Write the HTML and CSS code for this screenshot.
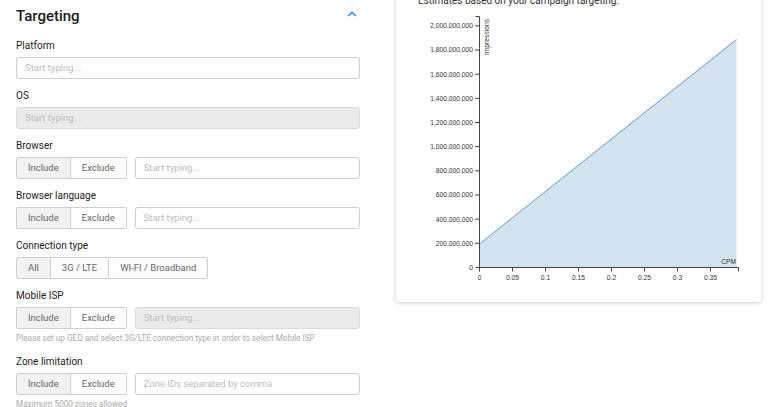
FILE: index.html
```html
<!DOCTYPE html>
<html lang="en">
<head>
    <meta charset="utf-8">
    <link rel="stylesheet" href="styles.css">
    <title>Campaign targeting</title>
</head>
<body>
<div class="page">
    <div class="targeting">
        <div class="head">
            <h2>Targeting</h2>
            <svg class="chev" width="10" height="6" viewBox="0 0 10 6"><polyline points="1,5 5,1.5 9,5" fill="none" stroke="#2d8cf0" stroke-width="1.6"/></svg>
        </div>

        <div class="field">
            <label>Platform</label>
            <div class="input">Start typing...</div>
        </div>

        <div class="field">
            <label>OS</label>
            <div class="input disabled">Start typing...</div>
        </div>

        <div class="field">
            <label>Browser</label>
            <div class="row">
                <div class="btns"><span class="btn on">Include</span><span class="btn">Exclude</span></div>
                <div class="input">Start typing...</div>
            </div>
        </div>

        <div class="field">
            <label>Browser language</label>
            <div class="row">
                <div class="btns"><span class="btn on">Include</span><span class="btn">Exclude</span></div>
                <div class="input">Start typing...</div>
            </div>
        </div>

        <div class="field">
            <label>Connection type</label>
            <div class="row">
                <div class="btns"><span class="btn on">All</span><span class="btn">3G / LTE</span><span class="btn">WI-FI / Broadband</span></div>
            </div>
        </div>

        <div class="field">
            <label>Mobile ISP</label>
            <div class="row">
                <div class="btns"><span class="btn on">Include</span><span class="btn">Exclude</span></div>
                <div class="input disabled">Start typing...</div>
            </div>
            <div class="help">Please set up GEO and select 3G/LTE connection type in order to select Mobile ISP</div>
        </div>

        <div class="field">
            <label>Zone limitation</label>
            <div class="row">
                <div class="btns"><span class="btn on">Include</span><span class="btn">Exclude</span></div>
                <div class="input">Zone IDs separated by comma</div>
            </div>
            <div class="help">Maximum 5000 zones allowed</div>
        </div>
    </div>

    <div class="card">
        <div class="note">Estimates based on your campaign targeting.</div>
        <svg class="chart" width="365" height="284" viewBox="396 8 365 284">
            <polygon points="479.5,267.5 479.5,244 736.5,39.5 736.5,267.5" fill="#d3e3f0"/>
            <path d="M479.5,267.5V244L736.5,39.5" fill="none" stroke="#5b9bd5" stroke-width="1"/>

            <g class="axis">
                <path d="M475.5,16.5H479.5V267.5H475.5"/>
                <path d="M475,243.3h4.5M475,219.2h4.5M475,195h4.5M475,170.8h4.5M475,146.6h4.5M475,122.5h4.5M475,98.3h4.5M475,74.2h4.5M475,50h4.5M475,25.8h4.5"/>
                <path d="M479.5,271.5V267.5H738.5V271.5"/>
                <path d="M512.5,267.5v4M545.5,267.5v4M578.5,267.5v4M611.5,267.5v4M644.5,267.5v4M677.5,267.5v4M710.5,267.5v4"/>
            </g>

            <g class="ticks ylab">
                <text x="473" y="269.8">0</text>
                <text x="473" y="245.6">200,000,000</text>
                <text x="473" y="221.5">400,000,000</text>
                <text x="473" y="197.3">600,000,000</text>
                <text x="473" y="173.1">800,000,000</text>
                <text x="473" y="148.9">1,000,000,000</text>
                <text x="473" y="124.8">1,200,000,000</text>
                <text x="473" y="100.6">1,400,000,000</text>
                <text x="473" y="76.5">1,600,000,000</text>
                <text x="473" y="52.3">1,800,000,000</text>
                <text x="473" y="28.1">2,000,000,000</text>
            </g>
            <g class="ticks xlab">
                <text x="479.5" y="279.5">0</text>
                <text x="512.5" y="279.5">0.05</text>
                <text x="545.5" y="279.5">0.1</text>
                <text x="578.5" y="279.5">0.15</text>
                <text x="611.5" y="279.5">0.2</text>
                <text x="644.5" y="279.5">0.25</text>
                <text x="677.5" y="279.5">0.3</text>
                <text x="710.5" y="279.5">0.35</text>
            </g>
            <text class="ticks" x="736" y="264" text-anchor="end">CPM</text>
            <text class="ticks" transform="translate(488.5,19) rotate(-90)" text-anchor="end">Impressions</text>
        </svg>
    </div>
</div>
</body>
</html>
```

FILE: styles.css
```css
body{
    margin: 0;
    background: #fff;
    font-family: Roboto, "Liberation Sans", sans-serif;
    color: #222;
    overflow: hidden;
}
.page{
    display: flex;
    align-items: flex-start;
}

/* left form */
.targeting{
    width: 344px;
    margin-left: 16px;
    padding-top: 6px;
}
.head{
    display: flex;
    justify-content: space-between;
    align-items: center;
    height: 20px;
    margin-bottom: 11px;
}
.head h2{
    margin: 0;
    font-size: 15px;
    font-weight: 500;
    line-height: 20px;
    color: #1b1b1b;
}
.chev{
    margin-right: 3px;
    margin-top: -4px;
}
.field{
    margin-bottom: 8px;
}
.field label{
    display: block;
    font-size: 10px;
    line-height: 14px;
    padding-top: 2px;
    margin-bottom: 4px;
    color: #222;
}
.input{
    flex: 1;
    height: 22px;
    box-sizing: border-box;
    border: 1px solid #cfcfcf;
    border-radius: 3px;
    padding: 0 8px;
    font-size: 9.5px;
    line-height: 20px;
    color: #bdbdbd;
    background: #fff;
}
.input.disabled{
    background: #ebebeb;
    border-color: #dadada;
}
.row{
    display: flex;
    gap: 8px;
}
.btns{
    display: flex;
    height: 22px;
    box-sizing: border-box;
    border: 1px solid #cfcfcf;
    border-radius: 2px;
}
.btn{
    padding: 0 11px;
    font-size: 9.5px;
    line-height: 20px;
    color: #666;
    background: #fff;
}
.btn + .btn{
    border-left: 1px solid #cfcfcf;
}
.btn.on{
    background: #f2f2f2;
}
.help{
    margin-top: 2px;
    font-size: 8.2px;
    line-height: 14px;
    color: #aaa;
}

/* estimate card */
.card{
    width: 365px;
    margin-left: 36px;
    margin-top: -12px;
    padding: 6px 0 10px;
    background: #fff;
    border-radius: 3px;
    box-shadow: 0 1px 4px rgba(0,0,0,0.2);
}
.note{
    margin-left: 22px;
    font-size: 10px;
    line-height: 14px;
    color: #333;
}
.chart{
    display: block;
}
.axis path{
    fill: none;
    stroke: #444;
    stroke-width: 1;
}
.ticks{
    font-family: "Liberation Sans", Arial, sans-serif;
    font-size: 6.7px;
    fill: #333;
}
.ylab text{
    text-anchor: end;
}
.xlab text{
    text-anchor: middle;
}
```
